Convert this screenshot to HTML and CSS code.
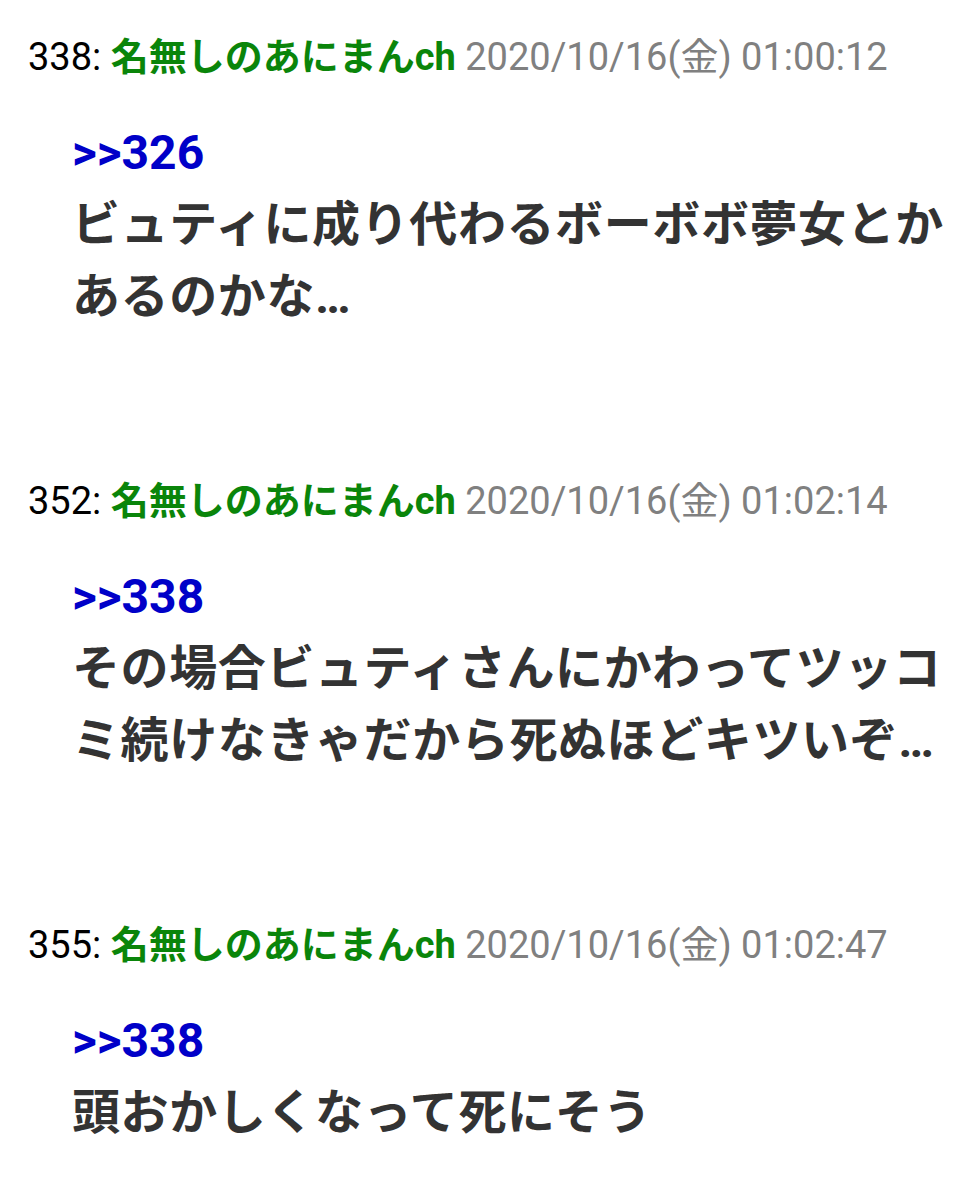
FILE: index.html
```html
<!DOCTYPE html>
<html lang="ja">
<head>
  <meta charset="UTF-8" />
  <meta name="viewport" content="width=device-width, initial-scale=1" />
  <title>あにまんch</title>
  <link rel="stylesheet" href="styles.css">
</head>
<body>

  <div class="thread">

    <div class="post">
      <div class="post-head">
        <span class="num">338:</span>
        <span class="name">名無しのあにまんch</span>
        <span class="date">2020/10/16(金) 01:00:12</span>
      </div>
      <div class="post-body">
        <a class="anchor" href="#">&gt;&gt;326</a><br>
        ビュティに成り代わるボーボボ夢女とかあるのかな…
      </div>
    </div>

    <div class="post">
      <div class="post-head">
        <span class="num">352:</span>
        <span class="name">名無しのあにまんch</span>
        <span class="date">2020/10/16(金) 01:02:14</span>
      </div>
      <div class="post-body">
        <a class="anchor" href="#">&gt;&gt;338</a><br>
        その場合ビュティさんにかわってツッコミ続けなきゃだから死ぬほどキツいぞ…
      </div>
    </div>

    <div class="post">
      <div class="post-head">
        <span class="num">355:</span>
        <span class="name">名無しのあにまんch</span>
        <span class="date">2020/10/16(金) 01:02:47</span>
      </div>
      <div class="post-body">
        <a class="anchor" href="#">&gt;&gt;338</a><br>
        頭おかしくなって死にそう
      </div>
    </div>

  </div>

</body>
</html>
```

FILE: styles.css
```css
* {
  margin: 0;
  padding: 0;
  box-sizing: border-box;
  font-family: Roboto, "Noto Sans CJK JP", sans-serif;
}

body {
  background-color: #fff;
  color: #000;
}

.thread {
  padding: 35px 0 0 28px;
}

.post {
  margin-bottom: 146px;
}

.post:last-child {
  margin-bottom: 0;
}

.post-head {
  font-size: 38px;
  line-height: 44px;
  white-space: nowrap;
}

.num {
  color: #000;
}

.name {
  color: #0a850a;
  font-weight: bold;
}

.date {
  color: #808080;
}

.post-body {
  margin-top: 38px;
  margin-left: 44px;
  font-size: 48px;
  font-weight: bold;
  line-height: 72px;
  letter-spacing: 0.6px;
  color: #333;
}

.anchor {
  color: #0000c8;
  text-decoration: none;
  letter-spacing: 0;
}
```
